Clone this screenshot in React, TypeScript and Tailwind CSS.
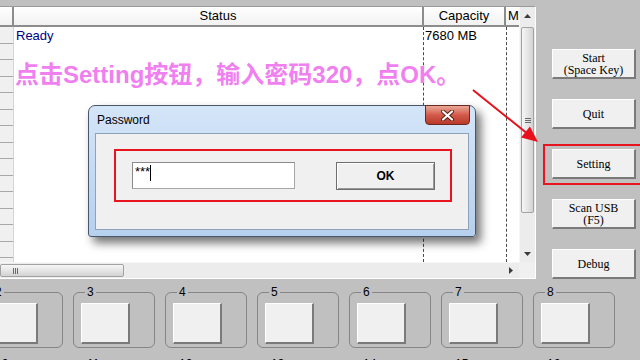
import React from 'react';

const raised =
  'bg-[#f0f0f0] border-t border-l border-t-white border-l-white border-b-2 border-r-2 border-b-[#7a7a7a] border-r-[#7a7a7a]';

const SideButton: React.FC<{ children: React.ReactNode }> = ({ children }) => (
  <div
    className={`w-[84px] h-[30px] flex items-center justify-center text-center text-[12px] leading-[12px] text-black font-[family-name:'Liberation_Serif','Times_New_Roman',serif] ${raised}`}
  >
    <span>{children}</span>
  </div>
);

const Slot: React.FC<{ label: number }> = ({ label }) => (
  <div className="relative shrink-0 w-[82px] h-[56px] rounded-[6px] border border-[#858585]">
    <span className="absolute left-[11px] top-[-8px] bg-[#c0c0c0] px-[2px] text-[12px] leading-[14px] text-black">
      {label}
    </span>
    <div className={`mt-[10px] ml-[7px] w-[49px] h-[41px] ${raised}`} />
  </div>
);

const ListView: React.FC = () => {
  const rows = Array.from({ length: 15 });
  return (
    <div className="mt-[6px] w-[536px] h-[273px] flex flex-col border-t border-t-[#9a9a9a] border-r border-r-white border-b border-b-white bg-white">
      <div className="flex flex-1 min-h-0">
        <div className="flex flex-col w-[519px]">
          {/* header */}
          <div className="flex h-[20px] text-[13px] leading-[18px] text-black bg-gradient-to-b from-white to-[#f0f0f0]">
            <div className="w-[14px] border-r-2 border-b-2 border-[#8c8c8c]" />
            <div className="w-[410px] border-r-2 border-b-2 border-[#8c8c8c] text-center">Status</div>
            <div className="w-[82px] border-r-2 border-b-2 border-[#8c8c8c] text-center">Capacity</div>
            <div className="w-[13px] border-b-2 border-[#8c8c8c] pl-[2px] overflow-hidden">M</div>
          </div>
          {/* body */}
          <div className="flex flex-1 min-h-0 overflow-hidden">
            <div className="w-[14px] bg-[#f0f0f0] border-r border-[#d4d4d4] flex flex-col">
              {rows.map((_, i) => (
                <div key={i} className="h-[16.5px] shrink-0 border-b border-[#a8a8a8]" />
              ))}
            </div>
            <div className="w-[409px] pl-[2px] text-[13px] leading-[17px] text-[#000080]">Ready</div>
            <div className="w-[83px] border-l border-dashed border-[#4a4a4a] pl-[1px] text-[13px] leading-[17px] text-black">
              7680 MB
            </div>
            <div className="w-[13px] border-l border-dashed border-[#4a4a4a]" />
          </div>
        </div>
        {/* vertical scrollbar */}
        <div className="w-[16px] flex flex-col bg-[#ececec] border-l border-[#f6f6f6]">
          <div className="h-[17px] flex items-center justify-center">
            <svg width="7" height="4" viewBox="0 0 7 4">
              <path d="M0 4 L3.5 0 L7 4 Z" fill="#3c3c3c" />
            </svg>
          </div>
          <div className="flex-1 pt-[3px]">
            <div className="h-[186px] mx-[1px] rounded-[2px] border border-[#a2a2a2] bg-gradient-to-r from-[#f6f6f6] via-[#e6e6e6] to-[#d2d2d2] flex items-center justify-center">
              <div className="flex flex-col gap-[1px]">
                <div className="w-[6px] h-[1px] bg-[#6a6a6a]" />
                <div className="w-[6px] h-[1px] bg-[#6a6a6a]" />
                <div className="w-[6px] h-[1px] bg-[#6a6a6a]" />
              </div>
            </div>
          </div>
          <div className="h-[17px] flex items-center justify-center">
            <svg width="7" height="4" viewBox="0 0 7 4">
              <path d="M0 0 L3.5 4 L7 0 Z" fill="#3c3c3c" />
            </svg>
          </div>
        </div>
      </div>
      {/* horizontal scrollbar */}
      <div className="flex h-[16px]">
        <div className="flex-1 flex bg-[#ececec] border-t border-[#f6f6f6]">
          <div className="w-[124px] my-[1px] rounded-[2px] border border-[#a2a2a2] bg-gradient-to-b from-[#f6f6f6] via-[#e6e6e6] to-[#d2d2d2] flex items-center pl-[12px]">
            <div className="flex gap-[1px]">
              <div className="w-[1px] h-[6px] bg-[#6a6a6a]" />
              <div className="w-[1px] h-[6px] bg-[#6a6a6a]" />
              <div className="w-[1px] h-[6px] bg-[#6a6a6a]" />
            </div>
          </div>
          <div className="flex-1" />
          <div className="w-[16px] flex items-center justify-center">
            <svg width="4" height="7" viewBox="0 0 4 7">
              <path d="M0 0 L4 3.5 L0 7 Z" fill="#3c3c3c" />
            </svg>
          </div>
        </div>
        <div className="w-[16px] bg-[#f0f0f0]" />
      </div>
    </div>
  );
};

const PasswordDialog: React.FC = () => (
  <div className="absolute left-[88px] top-[105px] w-[388px] h-[132px] rounded-t-[7px] rounded-b-[3px] border border-[#48586a] bg-gradient-to-b from-[#d4e5f8] to-[#b6d0ee] shadow-[5px_6px_10px_rgba(0,0,0,0.55)] flex flex-col px-[6px] pb-[6px]">
    <div className="h-[27px] flex items-center pl-[2px] text-[12px] text-black">Password</div>
    <div className="absolute right-[5px] top-[-1px] w-[45px] h-[20px] rounded-b-[4px] border border-[#6b2a20] bg-gradient-to-b from-[#e9a798] via-[#d25a4a] to-[#b9382a] flex items-center justify-center">
      <svg width="13" height="11" viewBox="0 0 13 11">
        <path d="M2 1.5 L11 9.5 M11 1.5 L2 9.5" stroke="#5a1a12" strokeWidth="4" strokeLinecap="round" />
        <path d="M2 1.5 L11 9.5 M11 1.5 L2 9.5" stroke="#ffffff" strokeWidth="2.2" strokeLinecap="round" />
      </svg>
    </div>
    <div className="flex-1 bg-[#f0f0f0] border border-[#8ea3ba] pt-[15px] pl-[18px]">
      <div className="w-[338px] h-[53px] border-2 border-[#e8141e] flex items-center pl-[16px] gap-[41px]">
        <div className="relative w-[163px] h-[27px] bg-white border border-[#a6a6a6] border-t-[#8a8a8a] border-l-[#8a8a8a] pl-[2px] text-[13px] leading-[18px] text-black flex">
          <span>***</span>
          <div className="w-[1px] h-[16px] mt-[2px] bg-black" />
        </div>
        <div className="w-[99px] h-[28px] flex items-center justify-center text-[12px] font-bold text-black border border-[#6e6e6e] bg-[#f0f0f0] shadow-[inset_1px_1px_0_#ffffff,inset_-1px_-1px_0_#9a9a9a]">
          OK
        </div>
      </div>
    </div>
  </div>
);

export default function App() {
  return (
    <div className="relative w-[640px] h-[360px] overflow-hidden bg-[#c0c0c0] font-[family-name:'Liberation_Sans',Arial,sans-serif] select-none">
      <div className="flex h-[279px]">
        <ListView />
        <div className="flex flex-col gap-[20px] pt-[49px] pl-[16px]">
          <SideButton>
            Start
            <br />
            (Space Key)
          </SideButton>
          <SideButton>Quit</SideButton>
          <SideButton>Setting</SideButton>
          <SideButton>
            Scan USB
            <br />
            (F5)
          </SideButton>
          <SideButton>Debug</SideButton>
        </div>
      </div>

      <div className="flex gap-[10px] ml-[-19px] mt-[13px]">
        {[2, 3, 4, 5, 6, 7, 8].map((n) => (
          <Slot key={n} label={n} />
        ))}
      </div>
      <div className="flex gap-[10px] ml-[-19px] mt-[16px]">
        {[10, 11, 12, 13, 14, 15, 16].map((n) => (
          <Slot key={n} label={n} />
        ))}
      </div>

      {/* annotation overlays */}
      <div className="absolute left-[15px] top-[62px] whitespace-nowrap text-[24px] leading-[26px] font-bold text-[#f07ff0] font-[family-name:'Liberation_Sans','Noto_Sans_CJK_SC',sans-serif]">
        点击Setting按钮，输入密码320，点OK。
      </div>

      <PasswordDialog />

      <svg className="absolute left-[468px] top-[85px]" width="80" height="65" viewBox="0 0 80 65">
        <line x1="5" y1="5" x2="58" y2="47.5" stroke="#e8101a" strokeWidth="2" />
        <path d="M70 57 L53.1 52.5 L61.9 41.5 Z" fill="#e8101a" />
      </svg>

      <div className="absolute left-[543px] top-[144px] w-[110px] h-[41px] border-2 border-[#e8141e]" />
    </div>
  );
}
